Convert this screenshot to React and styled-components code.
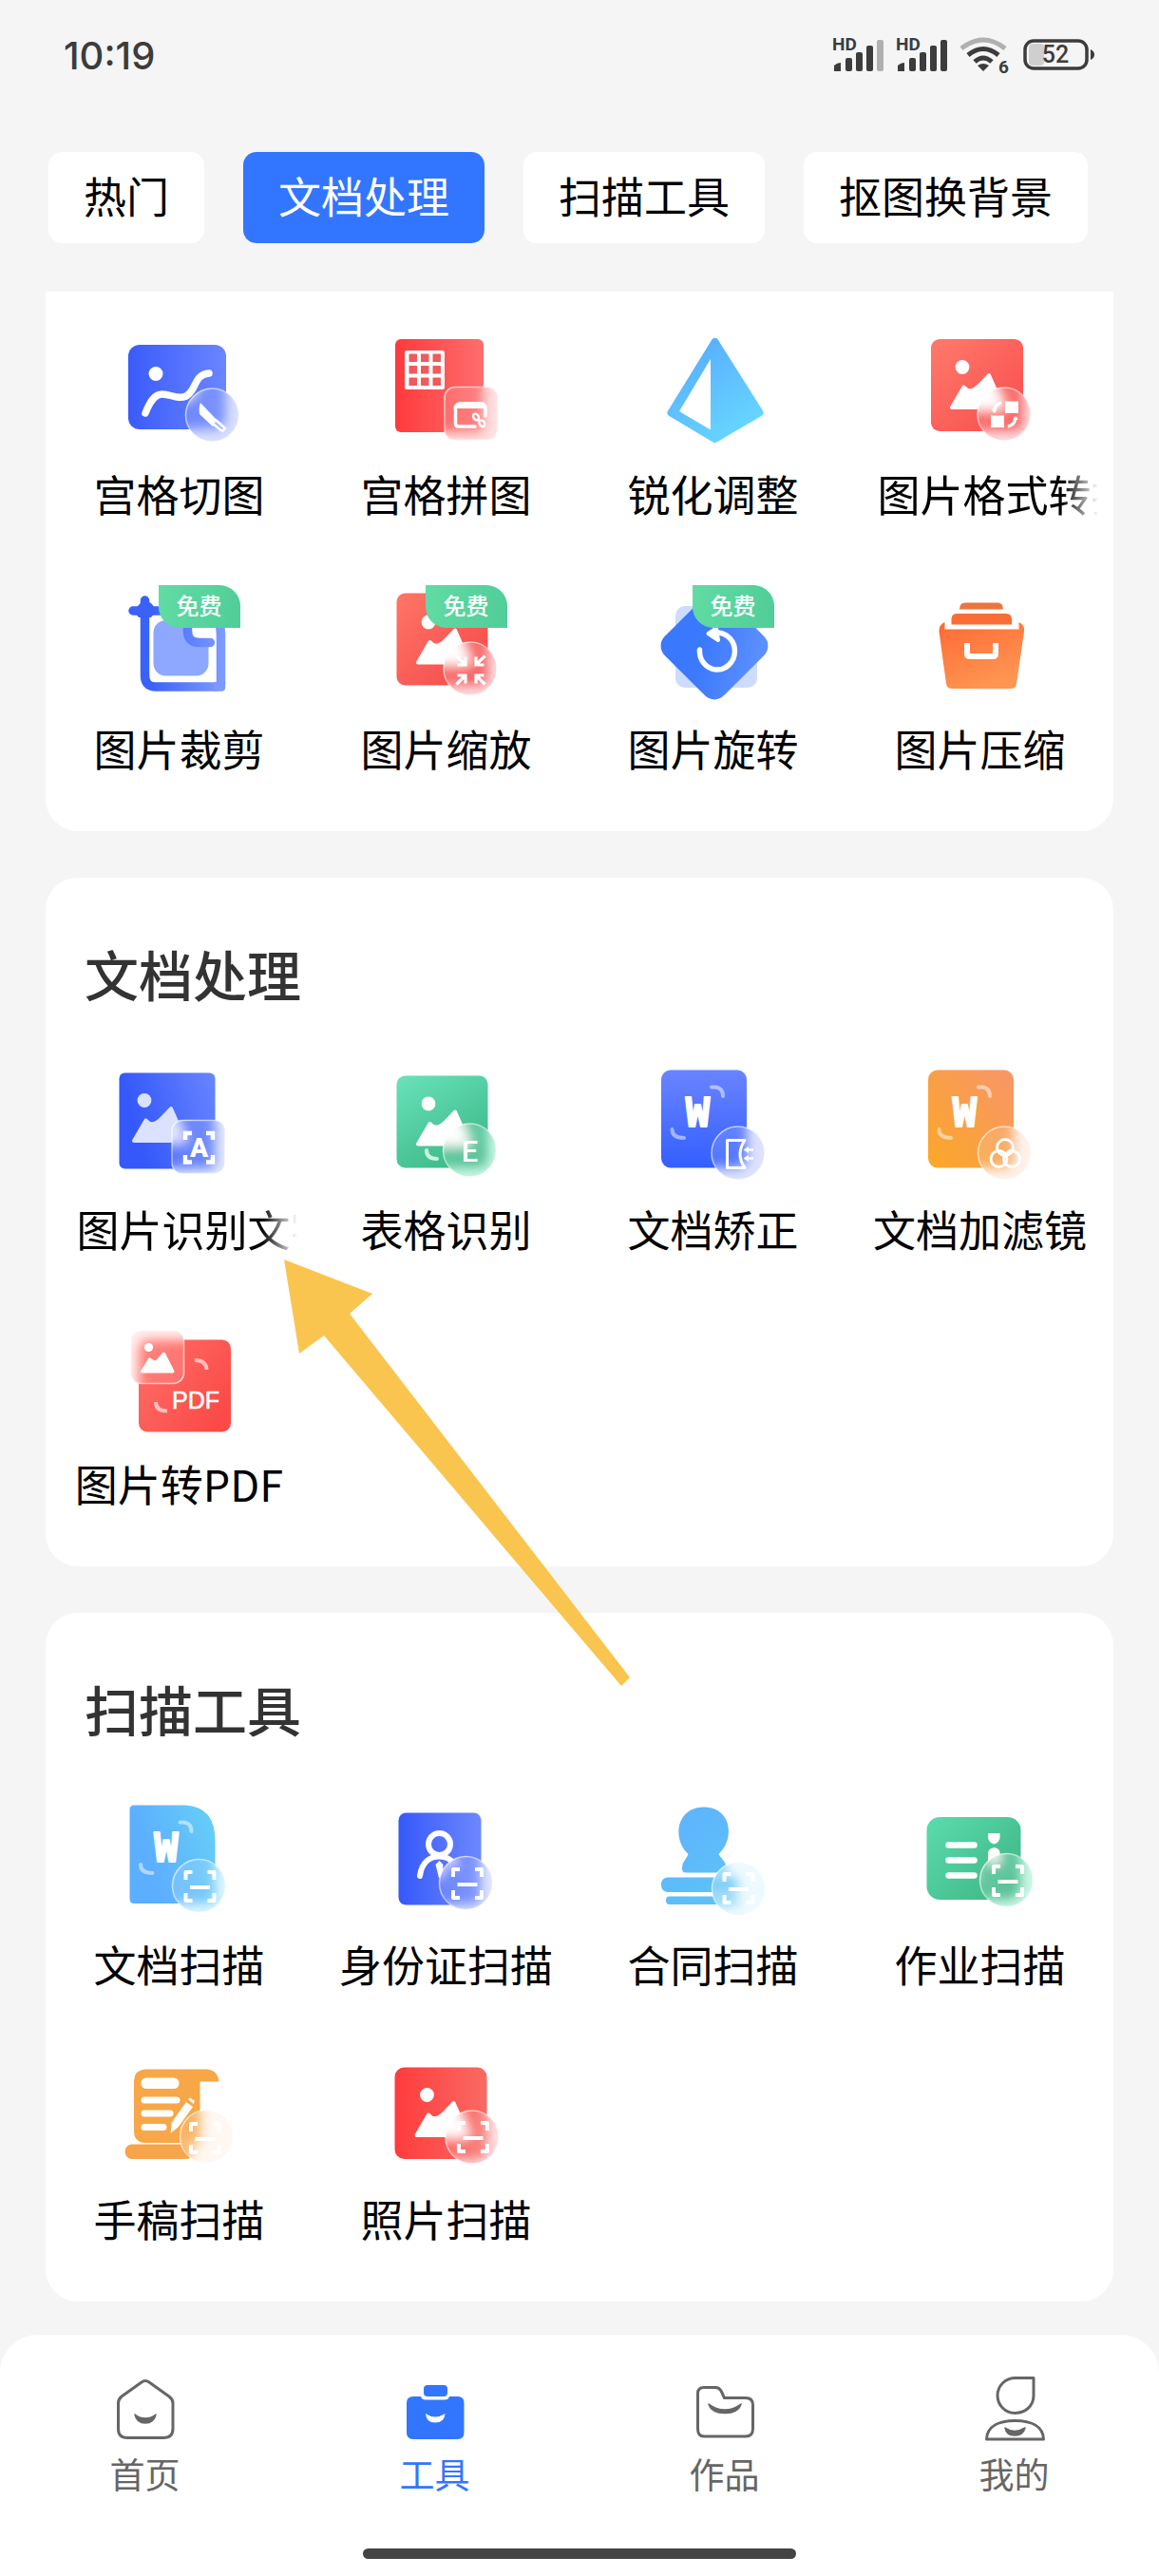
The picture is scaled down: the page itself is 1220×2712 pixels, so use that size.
import React, { useState } from "react";
import styled, { createGlobalStyle, css } from "styled-components";

/* ---------- icon helpers ---------- */

function Grad({ id, from, to, x2 = 1, y2 = 0 }) {
  return (
    <linearGradient id={id} x1="0" y1="0" x2={x2} y2={y2}>
      <stop offset="0" stopColor={from} />
      <stop offset="1" stopColor={to} />
    </linearGradient>
  );
}

// frosted disc or tile that lies over the corner of an icon
function Glass({ id, cx, cy, pale, tile, flip, art, children }) {
  const shape = tile ? (
    <rect x={cx - 28} y={cy - 28} width="56" height="56" rx="11" />
  ) : (
    <circle cx={cx} cy={cy} r="28" />
  );
  return (
    <g>
      <defs>
        <clipPath id={`${id}-clip`}>{shape}</clipPath>
        <filter id={`${id}-blur`} x="-30%" y="-30%" width="160%" height="160%">
          <feGaussianBlur stdDeviation="6" />
        </filter>
        <linearGradient id={`${id}-edge`} x1={flip ? 1 : 0} y1={flip ? 1 : 0} x2={flip ? 0 : 1} y2={flip ? 0 : 1}>
          <stop offset="0" stopColor="#fff" stopOpacity="0.7" />
          <stop offset="0.5" stopColor="#fff" stopOpacity="0.4" />
          <stop offset="1" stopColor="#fff" stopOpacity="0.9" />
        </linearGradient>
      </defs>
      <g clipPath={`url(#${id}-clip)`}>
        <rect x={cx - 29} y={cy - 29} width="58" height="58" fill={pale} />
        <g filter={`url(#${id}-blur)`}>{art}</g>
        <rect x={cx - 29} y={cy - 29} width="58" height="58" fill="#fff" fillOpacity="0.14" />
      </g>
      <g fill="none" stroke={`url(#${id}-edge)`} strokeWidth="1.6">{shape}</g>
      {children}
    </g>
  );
}

function Landscape({ x = 0, y = 0, fill = "#fff" }) {
  return (
    <g transform={`translate(${x} ${y})`} fill={fill}>
      <circle cx="45" cy="38.5" r="7.4" />
      <path
        d="M34 81 L46.5 59.5 Q52 66 58.5 61.5 Q62 59 73 47 L88 81 Z"
        stroke={fill}
        strokeWidth="4"
        strokeLinejoin="round"
      />
    </g>
  );
}

function ScanMark({ x, y }) {
  return (
    <g transform={`translate(${x} ${y})`} fill="none" stroke="#fff" strokeWidth="4" strokeLinejoin="round">
      <path d="M-15 -7 V-15 H-8 M8 -15 H15 V-7 M15 7 V15 H8 M-8 15 H-15 V7" />
      <path d="M-10.500 1 H10.500" />
    </g>
  );
}

function WordMark({ x = 0 }) {
  return (
    <g transform={`translate(${x} 0)`}>
      <text
        x="47.500"
        y="64"
        textAnchor="middle"
        fontFamily="DejaVu Sans Mono, monospace"
        fontWeight="700"
        fontSize="42"
        fill="#fff"
        stroke="#fff"
        strokeWidth="2"
        strokeLinejoin="round"
      >
        W
      </text>
      <g fill="none" stroke="#fff" strokeOpacity="0.5" strokeWidth="4" strokeLinecap="round">
        <path d="M62 22.500 H65 Q74 23 74 32" />
        <path d="M20.500 67 Q20.500 76 33 76" />
      </g>
    </g>
  );
}

/* ---------- icons ---------- */

function GridCut() {
  const art = (
    <>
      <rect x="10" y="15" width="103" height="89" rx="12" fill="url(#gc)" />
      <circle cx="39" cy="45.500" r="7.500" fill="#fff" />
      <path
        d="M28 87 C33 74 38 67 46 67 C55 67 62 73 71 69 C82 63 79 46 95 45"
        fill="none"
        stroke="#fff"
        strokeWidth="7.500"
        strokeLinecap="round"
      />
    </>
  );
  return (
    <>
      <Grad id="gc" from="#3a5bfb" to="#6a86ff" />
      {art}
      <Glass id="gc" cx={98.5} cy={89} pale="#d3dbff" art={art}>
        <path d="M86 76 Q84 80 85 88 L99 101 L104 95 Z" fill="#fff" />
        <path d="M102 94 L112 103 L109 106 L99 98 Z" fill="#a9b6fb" stroke="#fff" strokeWidth="2.500" strokeLinejoin="round" />
      </Glass>
    </>
  );
}

function GridJoin() {
  const art = <rect x="10" y="9" width="93" height="98" rx="6" fill="url(#gj)" />;
  const steps = [24.5, 37, 49.5];
  return (
    <>
      <Grad id="gj" from="#ff3a3c" to="#ff6d6d" />
      {art}
      <rect x="20" y="21" width="42" height="41" rx="2.500" fill="#fff" />
      {steps.map((y) =>
        steps.map((x) => <rect key={`${x}-${y}`} x={x} y={y} width="8.500" height="8.500" rx="0.500" fill="#f05a5c" />)
      )}
      <Glass id="gj" cx={90} cy={87.5} pale="#ffdcdc" tile art={art}>
        <path d="M71 82 Q73 75 79 75 H101 Q105 75 107 82 Z" fill="#fff" />
        <path d="M73.500 81 V98 Q73.500 101 77 101 H94 M105 81 V90" fill="none" stroke="#fff" strokeWidth="3.500" strokeLinecap="round" />
        <ellipse cx="95" cy="91" rx="2.600" ry="3.600" fill="none" stroke="#fff" strokeWidth="2.500" transform="rotate(-35 95 91)" />
        <ellipse cx="101.500" cy="98" rx="2.600" ry="3.600" fill="none" stroke="#fff" strokeWidth="2.500" transform="rotate(-35 101 98)" />
      </Glass>
    </>
  );
}

function Prism() {
  return (
    <>
      <Grad id="pr" from="#56a8ff" to="#66d4ff" x2={0.6} y2={1} />
      <path
        d="M65.500 12 L19.500 86.500 L65.500 114 L112.500 86.500 Z"
        fill="url(#pr)"
        stroke="url(#pr)"
        strokeWidth="8"
        strokeLinejoin="round"
      />
      <path d="M61 30 L28 85 L61 104.500 Z" fill="#fff" />
    </>
  );
}

function PhotoConvert() {
  const art = (
    <>
      <rect x="12" y="9" width="97" height="97" rx="9" fill="url(#pc)" />
      <Landscape />
    </>
  );
  return (
    <>
      <Grad id="pc" from="#ff7a6b" to="#f94b4c" y2={1} />
      {art}
      <Glass id="pc" cx={89} cy={88} pale="#ffd9de" art={art}>
        <rect x="90" y="74.500" width="14" height="12.500" fill="#fff" />
        <rect x="75" y="89.500" width="14" height="12.500" fill="#fff" />
        <path d="M78.500 86 Q78.500 78 86 76 M101 91 Q101 99 93 101" fill="none" stroke="#fff" strokeWidth="3.200" />
        <path d="M75.500 82.500 H81.500 L78.500 87 Z M98 94 L101 90 L104 94 Z" fill="#fff" />
      </Glass>
    </>
  );
}

function Crop() {
  return (
    <>
      <linearGradient id="cr" gradientUnits="userSpaceOnUse" x1="14" y1="0" x2="112" y2="0">
        <stop offset="0.200" stopColor="#3a62f8" />
        <stop offset="1" stopColor="#7f9cff" />
      </linearGradient>
      <rect x="36.500" y="37" width="58" height="58.500" rx="13" fill="#8ea8ff" />
      <rect x="76" y="33" width="27" height="26" fill="#fff" />
      <g fill="none" stroke="url(#cr)" strokeWidth="9.500" strokeLinecap="round">
        <path d="M27.500 16 V95 Q27.500 107 39 107 H104" />
        <path d="M15 27 H82 Q107.500 27 107.500 52 V104" />
        <path d="M72.500 40 V48 Q72.500 60.500 85 60.500 H96.500" />
      </g>
      <path d="M100 102.300 H112.200 V108 Q112.200 111.700 108 111.700 H100 Z" fill="#7c99fe" />
      <path d="M27.500 14 L35 20 L40 27 L34 34 H21 L15 27 L21 21 Z" fill="#3a62f8" />
    </>
  );
}

function Shrink() {
  const art = (
    <>
      <rect x="11.500" y="8.500" width="96" height="97" rx="9" fill="url(#sh)" />
      <Landscape y={0.5} />
    </>
  );
  return (
    <>
      <Grad id="sh" from="#ff7566" to="#f4484a" y2={1} />
      {art}
      <Glass id="sh" cx={89} cy={88} pale="#ffd5da" art={art}>
        {[0, 90, 180, 270].map((turn) => (
          <g key={turn} transform={`translate(89.500 89.500) rotate(${turn})`} fill="none" stroke="#fff" strokeWidth="3.200">
            <path d="M-15 -15 L-6 -6 M-14 -5.500 H-5.500 V-14" />
          </g>
        ))}
      </Glass>
    </>
  );
}

function Rotate() {
  return (
    <>
      <Grad id="ro" from="#3a78fd" to="#709dff" x2={1} y2={-0.6} />
      <rect x="24" y="22" width="86" height="86" rx="10" fill="#cddcfd" />
      <rect x="21" y="20" width="88" height="88" rx="14" fill="url(#ro)" transform="rotate(45 65 64)" />
      <path d="M49.500 68 A18.500 19.500 0 1 0 69 50" fill="none" stroke="#fff" strokeWidth="5.500" strokeLinecap="round" />
      <path d="M58.500 51 L67 45.500 L69 58 Z" fill="#fff" stroke="#fff" strokeWidth="4" strokeLinejoin="round" />
    </>
  );
}

function Archive() {
  return (
    <>
      <Grad id="ar" from="#ff6a34" to="#ff9552" x2={0.5} y2={1} />
      <path d="M42 25.500 Q42 18.500 48 18.500 H82 Q88 18.500 88 25.500 Z" fill="#ee743e" />
      <path d="M33.500 41.500 V36 Q33.500 30 39 30 H91 Q97 30 97 36 V41.500 Z" fill="#fa6d36" />
      <path
        d="M26.500 39 V46.500 H104.500 V39 Q111 42 110 49 L102 104 Q101 109 96 109 H34 Q29 109 28 104 L20.500 49 Q20 42 26.500 39 Z"
        fill="url(#ar)"
      />
      <path d="M50 61 V72 Q50 75 53 75 H77 Q80 75 80 72 V61" fill="none" stroke="#fff" strokeWidth="6" />
    </>
  );
}

function TextOcr() {
  const art = (
    <>
      <rect x="0.500" y="7.500" width="101" height="101" rx="6" fill="url(#to)" />
      <Landscape x={-18} y={-2} fill="#dbe2ff" />
    </>
  );
  return (
    <>
      <Grad id="to" from="#3558fa" to="#6c8aff" y2={-0.3} />
      {art}
      <Glass id="to" cx={84} cy={85.5} pale="#dfe4ff" tile art={art}>
        <path
          d="M70 78 V71 H77 M92 71 H99 V78 M99 94 V101.500 H92 M77 101.500 H70 V94"
          fill="none"
          stroke="#fff"
          strokeWidth="4.500"
        />
        <text x="84.500" y="96" textAnchor="middle" fontFamily="Roboto, sans-serif" fontWeight="900" fontSize="28" fill="#fff">
          A
        </text>
      </Glass>
    </>
  );
}

function TableOcr() {
  const art = (
    <>
      <rect x="11.500" y="10.500" width="96" height="97" rx="9" fill="url(#ta)" />
      <Landscape y={1.5} />
    </>
  );
  return (
    <>
      <Grad id="ta" from="#69e2ba" to="#3fba8a" x2={0.6} y2={1} />
      {art}
      <path d="M43 89 Q43 98 54 98" fill="none" stroke="#c6f3e0" strokeWidth="4" strokeLinecap="round" />
      <Glass id="ta" cx={88.5} cy={89} pale="#c4f5e2" art={art}>
        <text x="88.500" y="101" textAnchor="middle" fontFamily="Roboto, sans-serif" fontWeight="500" fontSize="31" fill="#fff">
          E
        </text>
      </Glass>
    </>
  );
}

function Straighten() {
  const art = (
    <>
      <rect x="9" y="4.500" width="90" height="103" rx="10" fill="url(#st)" />
      <WordMark />
    </>
  );
  return (
    <>
      <Grad id="st" from="#6a84ff" to="#335fff" x2={0} y2={1} />
      {art}
      <Glass id="st" cx={90} cy={92} pale="#d9deff" art={art}>
        <path d="M78.500 78.500 H97 Q87 93 97 107.500 H78.500 Z" fill="none" stroke="#fff" strokeWidth="3" strokeLinejoin="round" />
        <path d="M98 88.500 H106 M98 97.500 H106" stroke="#fff" strokeWidth="2.500" />
        <path d="M101 85 L95.500 88.500 L101 92 Z M101 94 L95.500 97.500 L101 101 Z" fill="#fff" />
      </Glass>
    </>
  );
}

function Filter() {
  const art = (
    <>
      <rect x="9" y="4.500" width="90" height="103" rx="10" fill="url(#fi)" />
      <WordMark />
    </>
  );
  return (
    <>
      <linearGradient id="fi" x1="0" y1="1" x2="1" y2="0">
        <stop offset="0" stopColor="#faa827" />
        <stop offset="1" stopColor="#f8966a" />
      </linearGradient>
      {art}
      <Glass id="fi" cx={89.5} cy={92} pale="#fff0e8" art={art}>
        <g fill="none" stroke="#fff" strokeWidth="3">
          <circle cx="90" cy="86" r="8.500" />
          <circle cx="83.500" cy="98" r="8.500" />
          <circle cx="97" cy="98" r="8.500" />
        </g>
      </Glass>
    </>
  );
}

function ToPdf() {
  const art = <rect x="21" y="20.500" width="97" height="97" rx="9" fill="url(#pd)" />;
  return (
    <>
      <Grad id="pd" from="#ff7069" to="#fb4a47" y2={0.7} />
      {art}
      <g fill="none" stroke="#fff" strokeOpacity="0.6" strokeWidth="4">
        <path d="M80 42 Q92 42 92.500 52" />
        <path d="M39 86 Q39 95.500 51 95.500" />
      </g>
      <text x="81" y="93" textAnchor="middle" fontFamily="Liberation Sans, sans-serif" fontSize="25" stroke="#fff" strokeWidth="0.600" fill="#fff">
        PDF
      </text>
      <Glass id="pd" cx={40.5} cy={38.5} pale="#ffeceb" tile flip art={art}>
        <circle cx="31.500" cy="28.500" r="4.600" fill="#fff" />
        <path d="M24.500 54 L32.500 41 L39 44.500 L47.500 35 L57 54 Z" fill="#fff" stroke="#fff" strokeWidth="3" strokeLinejoin="round" />
      </Glass>
    </>
  );
}

function DocScan() {
  const art = (
    <>
      <path
        d="M16 4.500 H70 Q101.500 6 101.500 42 V103 Q101.500 108 96.500 108 H16 Q11.500 108 11.500 103 V9 Q11.500 4.500 16 4.500 Z"
        fill="url(#ds)"
      />
      <WordMark x={2.5} />
    </>
  );
  return (
    <>
      <Grad id="ds" from="#5cafff" to="#68d6f4" y2={-0.4} />
      {art}
      <Glass id="ds" cx={84.5} cy={89.5} pale="#d8f5ff" art={art}>
        <ScanMark x={85.5} y={90} />
      </Glass>
    </>
  );
}

function IdScan() {
  const art = (
    <>
      <rect x="13.500" y="12.500" width="87" height="97" rx="8" fill="url(#is)" />
      <circle cx="56.500" cy="45.500" r="11.500" fill="none" stroke="#fff" strokeWidth="6" />
      <path d="M36 79 C38 64 47 58.500 57 58.500 C63 58.500 68 61 72 66" fill="none" stroke="#fff" strokeWidth="6" strokeLinecap="round" />
      <path d="M56.500 63 L60.500 67 L59 81 H56 L52.500 67 Z" fill="#fff" />
    </>
  );
  return (
    <>
      <Grad id="is" from="#3558fa" to="#6d88ff" />
      {art}
      <Glass id="is" cx={84.5} cy={86.5} pale="#dfe3ff" art={art}>
        <ScanMark x={86} y={87} />
      </Glass>
    </>
  );
}

function ContractScan() {
  const art = (
    <g fill="url(#cs)">
      <path d="M37.500 56 C20 40 25 6.500 54 6.500 C83 6.500 87 40 69.500 56 C73 62 77.500 64 77.500 71 V75.500 H35 Q31 75.500 31 71 C31 64 35 62 37.500 56 Z" />
      <rect x="9" y="80.500" width="81" height="15.500" rx="7" />
      <rect x="14" y="100.500" width="76" height="8.500" rx="4" />
    </g>
  );
  return (
    <>
      <linearGradient id="cs" gradientUnits="userSpaceOnUse" x1="10" y1="0" x2="100" y2="110">
        <stop offset="0" stopColor="#5fb0ff" />
        <stop offset="1" stopColor="#5cc6f6" />
      </linearGradient>
      {art}
      <Glass id="cs" cx={90.5} cy={92.5} pale="#ebfaff" art={art}>
        <ScanMark x={90.5} y={92} />
      </Glass>
    </>
  );
}

function HomeworkScan() {
  const art = (
    <>
      <rect x="7.500" y="17" width="99" height="87" rx="14" fill="url(#hs)" />
      <path d="M30.500 46.500 H57.500 M30.500 62.500 H57.500 M30.500 78.500 H57.500" stroke="#fff" strokeWidth="6.500" strokeLinecap="round" />
      <path d="M72 34 H84.500 V39 Q83.500 44 78.500 45.500 Q73 44 72 39 Z" fill="#fff" />
      <path d="M72 66 V54 Q73 50 78.500 49 Q84 50 84.500 54 V66 Z" fill="#fff" />
    </>
  );
  return (
    <>
      <Grad id="hs" from="#5adcae" to="#41b686" y2={0.8} />
      {art}
      <Glass id="hs" cx={91.5} cy={83.5} pale="#c6f6e3" art={art}>
        <ScanMark x={93} y={84} />
      </Glass>
    </>
  );
}

function ManuscriptScan() {
  const art = (
    <>
      <path
        d="M28 14.500 H92 Q104 15 105.500 27.500 H85.500 V92 H26 Q16 90 16 80 V26 Q17 15 28 14.500 Z"
        fill="#f7a747"
      />
      <rect x="6.500" y="93.500" width="72" height="15.500" rx="7.500" fill="#f6a54a" />
      <g fill="#fff">
        <rect x="23.500" y="23.500" width="40" height="11.500" rx="5.500" />
        <rect x="23.500" y="43.500" width="41" height="7" rx="3.500" />
        <rect x="23.500" y="57.500" width="34" height="7" rx="3.500" />
        <rect x="23.500" y="72" width="27" height="7" rx="3.500" />
      </g>
    </>
  );
  return (
    <>
      {art}
      <path d="M71 49 L78 54 L63 75 L54.500 82 L56 70 Z M73 46 L75 44.500 L80 48 L78.500 51 Z" fill="#fff" />
      <Glass id="ms" cx={92.5} cy={85.5} pale="#fff6f0" art={art}>
        <ScanMark x={91} y={87} />
      </Glass>
    </>
  );
}

function PhotoScan() {
  const art = (
    <>
      <rect x="9.500" y="12.500" width="97" height="96.500" rx="10" fill="url(#ps)" />
      <Landscape x={-1.5} y={3} />
    </>
  );
  return (
    <>
      <Grad id="ps" from="#ff3b3c" to="#f96a63" />
      {art}
      <Glass id="ps" cx={91} cy={86} pale="#ffd8de" art={art}>
        <ScanMark x={92} y={86} />
      </Glass>
    </>
  );
}

/* ---------- bottom bar icons ---------- */

const tabStroke = { fill: "none", stroke: "currentColor", strokeWidth: 3, strokeLinejoin: "round" };

function HomeTab() {
  return (
    <>
      <path d="M36 6.500 Q38 6.500 40 8 L61 23 Q65 26 65 30 V57 Q65 66.500 55 66.500 H17 Q7.500 66.500 7.500 57 V30 Q7.500 26 11 23 L32 8 Q34 6.500 36 6.500 Z" {...tabStroke} />
      <path d="M25 42 Q36 50 47 42 Q45 51 36 51 Q27 51 25 42 Z" fill="currentColor" stroke="currentColor" strokeWidth="1.500" strokeLinejoin="round" />
    </>
  );
}

function ToolsTab() {
  return (
    <>
      <rect x="24" y="11" width="25" height="12" rx="4" fill="currentColor" />
      <path d="M13 23 H21 Q22 26.500 26 26.500 H46 Q50 26.500 51 23 H60 Q66.500 23 66.500 30 V61 Q66.500 68 60 68 H13 Q6 68 6 61 V30 Q6 23 13 23 Z" fill="currentColor" />
      <path d="M26 41 Q36 48 46.500 41 Q46 50.500 36 50.500 Q26.500 50.500 26 41 Z" fill="#fff" />
    </>
  );
}

function WorksTab() {
  return (
    <>
      <path d="M14 13.500 H26 Q30 13.500 32 17 L35.500 24.500 H58 Q65.500 24.500 65.500 32 V57 Q65.500 65 58 65 H14 Q7.500 65 7.500 57 V20 Q7.500 13.500 14 13.500 Z" {...tabStroke} />
      <path d="M19 31 Q36 43 53 31 Q50 40.500 36 40.500 Q22 40.500 19 31 Z" fill="currentColor" stroke="currentColor" strokeWidth="1.500" strokeLinejoin="round" />
    </>
  );
}

function MineTab() {
  return (
    <>
      <path d="M37 3.500 H56 V22 C56 34 46 40.500 36.500 40.500 C26 40.500 18 32 18 22 C18 12 26 3.500 37 3.500 Z" {...tabStroke} />
      <path d="M6.500 68 C7 54 20 48.500 36.500 48.500 C53 48.500 66 54 66.500 68 Z" {...tabStroke} />
      <path d="M26 56 Q36 63 47 56 Q45 64 36 64 Q27.500 64 26 56 Z" fill="currentColor" stroke="currentColor" strokeWidth="1.500" strokeLinejoin="round" />
    </>
  );
}

/* ---------- data ---------- */

const categories = ["热门", "文档处理", "扫描工具", "抠图换背景"];

const imageTools = [
  { name: "宫格切图", Icon: GridCut },
  { name: "宫格拼图", Icon: GridJoin },
  { name: "锐化调整", Icon: Prism },
  { name: "图片格式转换", Icon: PhotoConvert, fade: true },
  { name: "图片裁剪", Icon: Crop, free: true },
  { name: "图片缩放", Icon: Shrink, free: true },
  { name: "图片旋转", Icon: Rotate, free: true },
  { name: "图片压缩", Icon: Archive },
];

const docTools = [
  { name: "图片识别文字", Icon: TextOcr, fade: true },
  { name: "表格识别", Icon: TableOcr },
  { name: "文档矫正", Icon: Straighten },
  { name: "文档加滤镜", Icon: Filter },
  { name: "图片转PDF", Icon: ToPdf },
];

const scanTools = [
  { name: "文档扫描", Icon: DocScan },
  { name: "身份证扫描", Icon: IdScan },
  { name: "合同扫描", Icon: ContractScan },
  { name: "作业扫描", Icon: HomeworkScan },
  { name: "手稿扫描", Icon: ManuscriptScan },
  { name: "照片扫描", Icon: PhotoScan },
];

const tabs = [
  { name: "首页", Icon: HomeTab },
  { name: "工具", Icon: ToolsTab },
  { name: "作品", Icon: WorksTab },
  { name: "我的", Icon: MineTab },
];

/* ---------- page parts ---------- */

function Signal({ weak }) {
  return (
    <svg width="54" height="52" viewBox="0 -6 54 52" aria-hidden="true">
      <text x="0" y="15" fontFamily="Roboto, sans-serif" fontWeight="700" fontSize="19" fill="#3c3c3c">HD</text>
      <g fill="#3c3c3c">
        <path d="M2 37 V31 Q5 28 9 28 V37 Z" />
        <rect x="14" y="23" width="7" height="14" rx="2" />
        <rect x="25" y="17" width="7" height="20" rx="2" />
        <rect x="36" y="10" width="7" height="27" rx="2" />
        <rect x="47" y="4" width="7" height="33" rx="2" fill={weak ? "#b0b0b0" : "#3c3c3c"} />
      </g>
    </svg>
  );
}

function StatusIcons() {
  return (
    <StatusGroup>
      <Signal weak />
      <Signal />
      <svg width="54" height="52" viewBox="0 -6 54 52" fill="none" strokeWidth="5" aria-hidden="true">
        <path d="M2 13 Q25 -5 48 13" stroke="#b0b0b0" />
        <path d="M9 20 Q25 7 41 20" stroke="#3c3c3c" />
        <path d="M16 27 Q25 19 34 27" stroke="#3c3c3c" />
        <path d="M25 37 L19 31 Q25 27 31 31 Z" fill="#3c3c3c" />
        <text x="41" y="39" fontFamily="Roboto, sans-serif" fontWeight="700" fontSize="19" fill="#3c3c3c">6</text>
      </svg>
      <svg width="76" height="52" viewBox="0 -6 76 52" aria-hidden="true">
        <rect x="6" y="8" width="16" height="23" rx="4" fill="#cfcfcf" />
        <rect x="2" y="5" width="65" height="29" rx="9" fill="none" stroke="#3c3c3c" strokeWidth="3.500" />
        <path d="M71 14 Q75 16 75 19.500 Q75 23 71 25 Z" fill="#3c3c3c" />
        <text x="34" y="28" textAnchor="middle" fontFamily="Roboto, sans-serif" fontWeight="500" fontSize="25" fill="#3c3c3c">52</text>
      </svg>
    </StatusGroup>
  );
}

function ToolGrid({ tools }) {
  return (
    <Grid>
      {tools.map(({ name, Icon, free, fade }) => (
        <Tool key={name} type="button">
          <IconBox>
            <ToolSvg viewBox="0 0 128 128" aria-hidden="true">
              <Icon />
            </ToolSvg>
            {free && <FreeBadge>免费</FreeBadge>}
          </IconBox>
          <ToolName $fade={fade}>{name}</ToolName>
        </Tool>
      ))}
    </Grid>
  );
}

function App() {
  const [category, setCategory] = useState("文档处理");

  return (
    <Page>
      <GlobalStyle />
      <StatusBar>
        <Clock>10:19</Clock>
        <StatusIcons />
      </StatusBar>
      <Categories>
        {categories.map((name) => (
          <Category key={name} type="button" $active={name === category} onClick={() => setCategory(name)}>
            {name}
          </Category>
        ))}
      </Categories>
      <Main>
        <Card $cut>
          <ToolGrid tools={imageTools} />
        </Card>
        <Card>
          <Heading>文档处理</Heading>
          <ToolGrid tools={docTools} />
          <Pointer viewBox="0 0 365 449" aria-hidden="true">
            <path d="M0 0 L93 36 L69 57 L364 440 L355 449 L42 80 L16 99 Z" fill="#f9c54f" />
          </Pointer>
        </Card>
        <Card>
          <Heading>扫描工具</Heading>
          <ToolGrid tools={scanTools} />
        </Card>
      </Main>
      <BottomBar>
        <TabRow>
          {tabs.map(({ name, Icon }) => (
            <TabLink key={name} href="#" $active={name === "工具"}>
              <TabSvg viewBox="0 0 72 72" aria-hidden="true">
                <Icon />
              </TabSvg>
              {name}
            </TabLink>
          ))}
        </TabRow>
        <HomeIndicator />
      </BottomBar>
    </Page>
  );
}

const GlobalStyle = createGlobalStyle`
  * {
    box-sizing: border-box;
  }
  body {
    margin: 0;
    background-color: #f5f5f5;
    font-family: "Noto Sans CJK SC", sans-serif;
  }
  button {
    border: none;
    padding: 0;
    background: none;
    font-family: inherit;
    cursor: pointer;
  }
`;

const Page = styled.div`
  display: flex;
  flex-direction: column;
  min-height: 100vh;
`;

const StatusBar = styled.header`
  display: flex;
  align-items: center;
  justify-content: space-between;
  height: 116px;
  padding: 0 67px;
`;

const Clock = styled.span`
  font-family: Inter, sans-serif;
  font-size: 40px;
  font-weight: 500;
  color: #3c3c3c;
`;

const StatusGroup = styled.div`
  display: flex;
  align-items: center;
  gap: 13px;
`;

const Categories = styled.nav`
  display: flex;
  gap: 41px;
  padding: 44px 51px 51px;
`;

const Category = styled.button`
  height: 96px;
  padding: 0 37px 4px;
  border-radius: 14px;
  font-size: 45px;
  line-height: 92px;
  white-space: nowrap;
  color: #000;
  background-color: #fff;

  ${(props) =>
    props.$active &&
    css`
      color: #fff;
      background-color: #3276ff;
    `}
`;

const Main = styled.main`
  display: flex;
  flex: 1;
  flex-direction: column;
  gap: 49px;
  padding: 0 48px 35px;
`;

const Card = styled.section`
  position: relative;
  padding-bottom: 32px;
  border-radius: ${(props) => (props.$cut ? "0 0 34px 34px" : "34px")};
  background-color: #fff;
`;

const Heading = styled.h2`
  margin: 0;
  padding: 60px 41px 17px;
  font-size: 57px;
  font-weight: 500;
  line-height: 80px;
  color: #333;
`;

const Grid = styled.div`
  display: grid;
  grid-template-columns: repeat(4, 1fr);
`;

const Tool = styled.button`
  display: flex;
  flex-direction: column;
  align-items: center;
  min-width: 0;
  padding: 41px 0 25px;
`;

const IconBox = styled.span`
  position: relative;
  width: 128px;
  height: 128px;
`;

const ToolSvg = styled.svg`
  display: block;
  width: 100%;
  height: 100%;
`;

const FreeBadge = styled.span`
  position: absolute;
  top: 0;
  right: 0;
  width: 86px;
  height: 45px;
  border-radius: 0 22px 0 22px;
  font-size: 24px;
  font-weight: 500;
  line-height: 42px;
  text-align: center;
  color: #fff;
  background: linear-gradient(100deg, #62dba4, #50cd98);
`;

const ToolName = styled.span`
  margin-top: 14px;
  font-size: 45px;
  line-height: 60px;
  white-space: nowrap;
  color: #000;

  /* names too long for the cell run out to the right */
  ${(props) =>
    props.$fade &&
    css`
      width: 232px;
      margin-left: 16px;
      overflow: hidden;
      text-align: left;
      mask-image: linear-gradient(to right, #000 194px, transparent 232px);
    `}
`;

const Pointer = styled.svg`
  position: absolute;
  z-index: 1;
  top: 402px;
  left: 251px;
  width: 365px;
  height: 449px;
  pointer-events: none;
`;

const BottomBar = styled.footer`
  display: flex;
  flex-direction: column;
  align-items: center;
  gap: 53px;
  padding: 42px 0 18px;
  border-radius: 40px 40px 0 0;
  background-color: #fff;
`;

const TabRow = styled.nav`
  display: grid;
  grid-template-columns: repeat(4, 1fr);
  width: 100%;
`;

const TabLink = styled.a`
  display: flex;
  flex-direction: column;
  align-items: center;
  gap: 6px;
  font-size: 37px;
  line-height: 52px;
  text-decoration: none;
  color: ${(props) => (props.$active ? "#3276ff" : "#666")};
`;

const TabSvg = styled.svg`
  width: 72px;
  height: 72px;
`;

const HomeIndicator = styled.div`
  width: 456px;
  height: 11px;
  border-radius: 6px;
  background-color: #444;
`;

export default App;
